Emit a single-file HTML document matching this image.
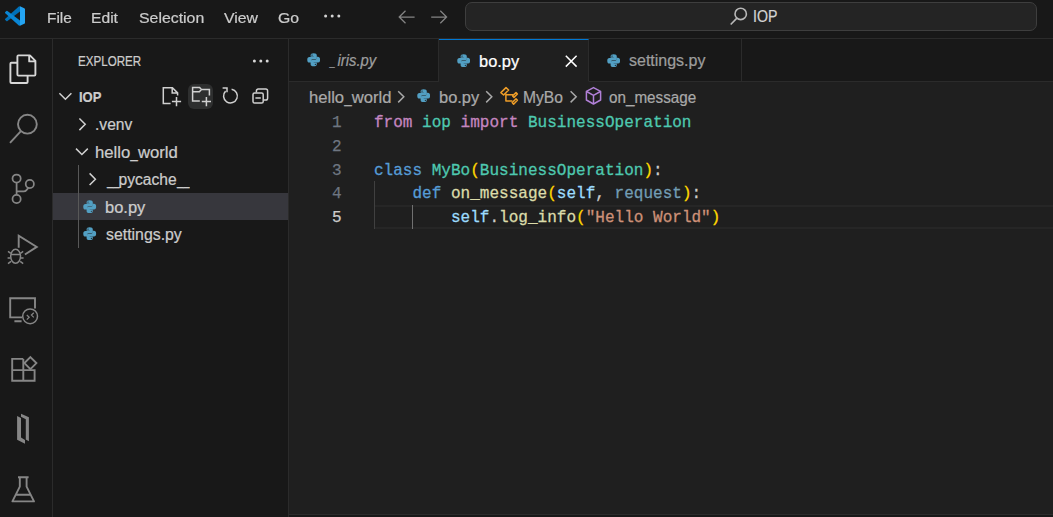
<!DOCTYPE html>
<html lang="en">
<head>
<meta charset="utf-8">
<title>bo.py - IOP - Visual Studio Code</title>
<style>
*{box-sizing:border-box;margin:0;padding:0}
html,body{width:1053px;height:517px;overflow:hidden;background:#181818}
body{position:relative;font-family:"Liberation Sans",sans-serif;color:#ccc;-webkit-font-smoothing:antialiased}
.abs{position:absolute}
.t{position:absolute;white-space:pre;line-height:1;transform-origin:0 0;-webkit-text-stroke:0.22px currentColor}
/* regions */
#titlebar{left:0;top:0;width:1053px;height:38px;background:#181818}
#tb-border{left:0;top:38px;width:1053px;height:1px;background:#2b2b2b}
#activity{left:0;top:39px;width:52px;height:478px;background:#181818}
#act-border{left:52px;top:39px;width:1px;height:478px;background:#2b2b2b}
#sidebar{left:53px;top:39px;width:235px;height:478px;background:#181818}
#side-border{left:288px;top:39px;width:1px;height:478px;background:#2b2b2b}
#editor{left:289px;top:39px;width:764px;height:475px;background:#1f1f1f}
#tabs{left:289px;top:39px;width:764px;height:43px;background:#181818}
#tabs-border{left:289px;top:81px;width:764px;height:1px;background:#2b2b2b}
#bottom-border{left:289px;top:514px;width:764px;height:1px;background:#2b2b2b}
#bottom-panel{left:289px;top:515px;width:764px;height:2px;background:#181818}
.tab{position:absolute;top:39px;height:43px;border-right:1px solid #2b2b2b;border-bottom:1px solid #2b2b2b;background:#181818}
.tab.active{background:#1f1f1f;border-bottom-color:#1f1f1f;border-top:1px solid #0078d4}
/* command center */
#cc{left:465px;top:2px;width:572px;height:29px;border:1px solid #3e3e3e;border-radius:7px;background:#242424}
/* text */
.us{display:inline-block;transform:scaleX(.72);transform-origin:0 0}
.menu{font-size:15.2px;color:#ccc}
.ui{font-size:15.2px;color:#ccc}
.code{font-family:"Liberation Mono",monospace;font-size:16.03px;color:#ccc;-webkit-text-stroke:0.3px currentColor}
.ln{font-family:"Liberation Mono",monospace;font-size:16.03px;color:#6e7681;-webkit-text-stroke:0.25px currentColor}
.kw{color:#c586c0}.kb{color:#569cd6}.cl{color:#4ec9b0}.fn{color:#dcdcaa}.pm{color:#9cdcfe}.st{color:#ce9178}.un{color:#729db4}.br{color:#ffd700}
</style>
</head>
<body>
<!-- ===== regions ===== -->
<div class="abs" id="titlebar"></div>
<div class="abs" id="tb-border"></div>
<div class="abs" id="activity"></div>
<div class="abs" id="act-border"></div>
<div class="abs" id="sidebar"></div>
<div class="abs" id="side-border"></div>
<div class="abs" id="editor"></div>
<div class="abs" id="tabs"></div>
<div class="abs" id="tabs-border"></div>
<div class="abs" id="bottom-border"></div>
<div class="abs" id="bottom-panel"></div>

<!-- ===== title bar ===== -->
<!-- vscode logo -->
<svg class="abs" style="left:5px;top:6px" width="20" height="20" viewBox="0 0 100 100">
  <path fill="#0070b8" d="M75 1 69 2.2 1.4 63.6a4.2 4.2 0 0 0 0 6.1l5.5 5a4.2 4.2 0 0 0 5.3.3L75 27.3z"/>
  <path fill="#0a86d4" d="M75 99 69 97.8 1.4 36.4a4.2 4.2 0 0 1 0-6.1l5.5-5a4.2 4.2 0 0 1 5.3-.3L75 72.7z"/>
  <path fill="#24a4f2" d="M75 .9 96.5 10.8A6.2 6.2 0 0 1 100 16.4V83.6a6.2 6.2 0 0 1-3.5 5.6L75 99.1z"/>
</svg>
<!-- menu ellipsis -->
<svg class="abs" style="left:322px;top:12px" width="22" height="10" viewBox="0 0 22 10"><g fill="#d4d4d4"><circle cx="3.6" cy="4" r="1.5"/><circle cx="10.2" cy="4" r="1.5"/><circle cx="16.8" cy="4" r="1.5"/></g></svg>
<!-- nav arrows -->
<svg class="abs" style="left:396px;top:7.6px" width="56" height="20" viewBox="0 0 56 20" fill="none" stroke="#848484" stroke-width="1.25" stroke-linecap="butt" stroke-linejoin="miter">
  <path d="M3.2 9H18.6M9.5 2.7 3.2 9l6.3 6.3"/>
  <path d="M35.2 9H50.6M44.3 2.7 50.6 9l-6.3 6.3"/>
</svg>
<!-- command center -->
<div class="abs" id="cc"></div>
<svg class="abs" style="left:728px;top:5px" width="22" height="22" viewBox="0 0 22 22" fill="none" stroke="#b8b8b8" stroke-width="1.6">
  <circle cx="12.7" cy="8.9" r="5.7"/><path d="M8.9 13.1 2.7 19.5"/>
</svg>


<!-- ===== activity bar ===== -->
<svg class="abs" style="left:0;top:39px" width="52" height="478" viewBox="0 39 52 478" fill="none" stroke="#868686" stroke-width="1.9" stroke-linejoin="miter">
  <!-- files (active) -->
  <g stroke="#d7d7d7" stroke-linejoin="round">
    <path d="M18.4 75.6H34.4Q35.4 75.6 35.4 74.6V60.9L29.9 55.4H18.4Q17.4 55.4 17.4 56.4V74.6Q17.4 75.6 18.4 75.6ZM29.2 55.8V61.4H35"/>
    <path d="M17 62.8H11.4Q10.4 62.8 10.4 63.8V82Q10.4 83 11.4 83H26.6Q27.6 83 27.6 82V76"/>
  </g>
  <!-- search -->
  <circle cx="27.4" cy="124.2" r="9.4"/><path d="M20.9 131.2 10 142.8"/>
  <!-- source control -->
  <g stroke-width="1.75"><circle cx="16.6" cy="178.6" r="4.1"/><circle cx="29.8" cy="184" r="4.1"/><circle cx="16.6" cy="199" r="4.1"/>
  <path d="M16.6 182.7V194.9M28.4 187.9 26.2 190.4Q25.4 191.4 23.8 191.4H16.8"/></g>
  <!-- debug -->
  <path d="M18.7 247.8V235.6L36.8 246.9 24.9 254.5"/>
  <g stroke-width="1.5"><ellipse cx="15.6" cy="256.3" rx="4.9" ry="7"/>
  <path d="M10.9 254.6H20.3M8 251.4 10.8 253.4M23.2 251.4 20.4 253.4M7.6 258H10.6M20.6 258H23.6M8 263.6 11 261.4M23.2 263.6 20.2 261.4"/></g>
  <!-- remote explorer -->
  <path d="M22 317.4H10.2V298.2H35V308.4M14.4 321.2H21.6"/>
  <g stroke-width="1.5"><circle cx="30.1" cy="316.3" r="7.4"/><path d="M26.8 315 29.2 317.3 26.8 319.6M33.8 312.8 31.4 315.1 33.8 317.4" stroke-width="1.2"/></g>
  <!-- extensions -->
  <path d="M23.3 358.9H12.2V380.8H34.6V370.1H12.2M23.3 358.9V380.8"/>
  <path d="M30.4 357.1 36.4 363.1 30.4 369.1 24.4 363.1Z"/>
  <!-- intersystems -->
  <g stroke="none" fill="#868686"><path d="M17.1 415.9 21 418V437.6L25 440V443.7L17.1 439.8Z"/><path d="M21 413.7 28.9 417.2V441.2L25.8 439.5V419.3L21 416.8Z"/></g>
  <!-- beaker -->
  <path stroke-linejoin="round" d="M18 477.2H28.6M19.8 477.2V486.6L12.4 501.4H34L26.6 486.6V477.2M15.6 494.8H30.8"/>
</svg>


<!-- ===== sidebar ===== -->
<!-- python icon symbol -->
<!-- explorer ellipsis -->
<svg class="abs" style="left:251.3px;top:56px" width="22" height="10" viewBox="0 0 22 10"><g fill="#d8d8d8"><circle cx="3.4" cy="5" r="1.5"/><circle cx="9.8" cy="5" r="1.5"/><circle cx="16.2" cy="5" r="1.5"/></g></svg>
<!-- selected row -->
<div class="abs" style="left:53px;top:193px;width:235px;height:27px;background:#37373d"></div>
<!-- indent guide -->
<div class="abs" style="left:78px;top:165px;width:1px;height:83px;background:#585858"></div>
<!-- twisties -->
<svg class="abs" style="left:56px;top:84px" width="50" height="110" viewBox="0 0 50 110" fill="none" stroke="#d0d0d0" stroke-width="1.5">
  <path d="M3.4 9.2 9.4 15.2 15.4 9.2"/>
  <path d="M23.4 34.5 29.2 40.3 23.4 46.1"/>
  <path d="M20 64.6 25.9 70.5 31.8 64.6"/>
  <path d="M33.6 89.4 39.4 95.2 33.6 101"/>
</svg>
<!-- file icons -->
<svg class="abs py" style="left:83.3px;top:199.6px" width="13.4" height="13.4" viewBox="0 0 16 16"><g fill="#529fc3"><path d="M4.3 2.7Q4.3 0.3 8 0.3Q11.7 0.3 11.7 2.7V6.1Q11.7 7.75 10 7.75H6.5Q4.8 7.75 4.8 9.4V11.4H2.9Q0.3 11.4 0.3 8Q0.3 4.7 2.9 4.7H8V4.35H4.3ZM6 1.7A.75.75 0 1 0 6 3.2A.75.75 0 0 0 6 1.7Z"/><path d="M11.7 13.3Q11.7 15.7 8 15.7Q4.3 15.7 4.3 13.3V9.9Q4.3 8.25 6 8.25H9.5Q11.2 8.25 11.2 6.6V4.6H13.1Q15.7 4.6 15.7 8Q15.7 11.3 13.1 11.3H8V11.65H11.7ZM10 14.3A.75.75 0 1 0 10 12.8A.75.75 0 0 0 10 14.3Z"/></g></svg>
<svg class="abs py" style="left:83.3px;top:227.1px" width="13.4" height="13.4" viewBox="0 0 16 16"><g fill="#529fc3"><path d="M4.3 2.7Q4.3 0.3 8 0.3Q11.7 0.3 11.7 2.7V6.1Q11.7 7.75 10 7.75H6.5Q4.8 7.75 4.8 9.4V11.4H2.9Q0.3 11.4 0.3 8Q0.3 4.7 2.9 4.7H8V4.35H4.3ZM6 1.7A.75.75 0 1 0 6 3.2A.75.75 0 0 0 6 1.7Z"/><path d="M11.7 13.3Q11.7 15.7 8 15.7Q4.3 15.7 4.3 13.3V9.9Q4.3 8.25 6 8.25H9.5Q11.2 8.25 11.2 6.6V4.6H13.1Q15.7 4.6 15.7 8Q15.7 11.3 13.1 11.3H8V11.65H11.7ZM10 14.3A.75.75 0 1 0 10 12.8A.75.75 0 0 0 10 14.3Z"/></g></svg>
<!-- toolbar: new-folder hover bg -->
<div class="abs" style="left:188px;top:84px;width:25px;height:25px;border-radius:6px;background:#2e2f2f"></div>
<svg class="abs" style="left:160px;top:84px" width="112" height="25" viewBox="0 0 112 25" fill="none" stroke="#d0d0d0" stroke-width="1.5" stroke-linejoin="miter">
  <!-- new file -->
  <path d="M10.6 19.4H3.3V3.7H12.4L17.6 8.9V11.4M12.2 3.9V9.1H17.4"/>
  <path d="M16.5 13V22.2M11.9 17.6H21.1"/>
  <!-- new folder -->
  <path d="M39.8 17H32.6V3.6H39.6L41.4 5.6H49.4V11.4M32.6 7.8H39.4L41.2 5.8"/>
  <path d="M46.4 13V22.2M41.8 17.6H51"/>
  <!-- refresh -->
  <path d="M65.6 7.1A6.9 6.9 0 1 0 71.6 5.2" />
  <path d="M62.6 3.9H67V8.3" />
  <!-- collapse all -->
  <rect x="93" y="8.9" width="10.2" height="10.2" rx="1.6"/>
  <path d="M96.4 8.6V6.9a1.8 1.8 0 0 1 1.8-1.8H105.8a1.8 1.8 0 0 1 1.8 1.8V14.2a1.8 1.8 0 0 1-1.8 1.8H103.6"/>
  <path d="M95.4 14H100.8"/>
</svg>


<!-- ===== tabs ===== -->
<div class="tab" style="left:289px;width:150px"></div>
<div class="tab active" style="left:439px;width:150px"></div>
<div class="tab" style="left:589px;width:153px"></div>
<!-- python file icons -->
<svg class="abs py" style="left:306.8px;top:53.4px" width="13.4" height="13.4" viewBox="0 0 16 16"><g fill="#529fc3"><path d="M4.3 2.7Q4.3 0.3 8 0.3Q11.7 0.3 11.7 2.7V6.1Q11.7 7.75 10 7.75H6.5Q4.8 7.75 4.8 9.4V11.4H2.9Q0.3 11.4 0.3 8Q0.3 4.7 2.9 4.7H8V4.35H4.3ZM6 1.7A.75.75 0 1 0 6 3.2A.75.75 0 0 0 6 1.7Z"/><path d="M11.7 13.3Q11.7 15.7 8 15.7Q4.3 15.7 4.3 13.3V9.9Q4.3 8.25 6 8.25H9.5Q11.2 8.25 11.2 6.6V4.6H13.1Q15.7 4.6 15.7 8Q15.7 11.3 13.1 11.3H8V11.65H11.7ZM10 14.3A.75.75 0 1 0 10 12.8A.75.75 0 0 0 10 14.3Z"/></g></svg>
<svg class="abs py" style="left:456.8px;top:53.5px" width="13.4" height="13.4" viewBox="0 0 16 16"><g fill="#529fc3"><path d="M4.3 2.7Q4.3 0.3 8 0.3Q11.7 0.3 11.7 2.7V6.1Q11.7 7.75 10 7.75H6.5Q4.8 7.75 4.8 9.4V11.4H2.9Q0.3 11.4 0.3 8Q0.3 4.7 2.9 4.7H8V4.35H4.3ZM6 1.7A.75.75 0 1 0 6 3.2A.75.75 0 0 0 6 1.7Z"/><path d="M11.7 13.3Q11.7 15.7 8 15.7Q4.3 15.7 4.3 13.3V9.9Q4.3 8.25 6 8.25H9.5Q11.2 8.25 11.2 6.6V4.6H13.1Q15.7 4.6 15.7 8Q15.7 11.3 13.1 11.3H8V11.65H11.7ZM10 14.3A.75.75 0 1 0 10 12.8A.75.75 0 0 0 10 14.3Z"/></g></svg>
<svg class="abs py" style="left:606.8px;top:53.5px" width="13.4" height="13.4" viewBox="0 0 16 16"><g fill="#529fc3"><path d="M4.3 2.7Q4.3 0.3 8 0.3Q11.7 0.3 11.7 2.7V6.1Q11.7 7.75 10 7.75H6.5Q4.8 7.75 4.8 9.4V11.4H2.9Q0.3 11.4 0.3 8Q0.3 4.7 2.9 4.7H8V4.35H4.3ZM6 1.7A.75.75 0 1 0 6 3.2A.75.75 0 0 0 6 1.7Z"/><path d="M11.7 13.3Q11.7 15.7 8 15.7Q4.3 15.7 4.3 13.3V9.9Q4.3 8.25 6 8.25H9.5Q11.2 8.25 11.2 6.6V4.6H13.1Q15.7 4.6 15.7 8Q15.7 11.3 13.1 11.3H8V11.65H11.7ZM10 14.3A.75.75 0 1 0 10 12.8A.75.75 0 0 0 10 14.3Z"/></g></svg>
<!-- close -->
<svg class="abs" style="left:564px;top:54px" width="14" height="14" viewBox="0 0 14 14" fill="none" stroke="#fff" stroke-width="1.5"><path d="M1.8 1.8 12.6 12.6M12.6 1.8 1.8 12.6"/></svg>


<!-- ===== breadcrumbs ===== -->
<svg class="abs py" style="left:417px;top:89px" width="13.4" height="13.4" viewBox="0 0 16 16"><g fill="#529fc3"><path d="M4.3 2.7Q4.3 0.3 8 0.3Q11.7 0.3 11.7 2.7V6.1Q11.7 7.75 10 7.75H6.5Q4.8 7.75 4.8 9.4V11.4H2.9Q0.3 11.4 0.3 8Q0.3 4.7 2.9 4.7H8V4.35H4.3ZM6 1.7A.75.75 0 1 0 6 3.2A.75.75 0 0 0 6 1.7Z"/><path d="M11.7 13.3Q11.7 15.7 8 15.7Q4.3 15.7 4.3 13.3V9.9Q4.3 8.25 6 8.25H9.5Q11.2 8.25 11.2 6.6V4.6H13.1Q15.7 4.6 15.7 8Q15.7 11.3 13.1 11.3H8V11.65H11.7ZM10 14.3A.75.75 0 1 0 10 12.8A.75.75 0 0 0 10 14.3Z"/></g></svg>
<!-- chevrons -->
<svg class="abs" style="left:395.4px;top:87.8px" width="190" height="18" viewBox="0 0 190 18" fill="none" stroke="#a9a9a9" stroke-width="1.5">
  <path d="M3.2 3.2 8.8 8.8 3.2 14.4"/>
  <path d="M91.2 3.2 96.8 8.8 91.2 14.4"/>
  <path d="M175.6 3.2 181.2 8.8 175.6 14.4"/>
</svg>
<!-- symbol-class (orange) -->
<svg class="abs" style="left:499px;top:86px" width="21" height="21" viewBox="0 0 21 21" fill="none" stroke="#ee9d28" stroke-width="1.5" stroke-linejoin="round">
  <path d="M7 1.6 9.6 4 4.6 9 1.9 6.6z"/>
  <path d="M17 6.5 18.4 8 15 11.4 13.6 9.9z"/>
  <path d="M17 12.8 18.4 14.3 14.6 18.3 13.2 16.6z"/>
  <path d="M6.9 7.4V15H13.4M6.9 8.8H14"/>
</svg>
<!-- symbol-method (purple cube) -->
<svg class="abs" style="left:584.3px;top:86.4px" width="19" height="20" viewBox="0 0 19 20" fill="none" stroke="#b180d7" stroke-width="1.5" stroke-linejoin="round">
  <path d="M9.5 1.6 16.6 5.4V14L9.5 18 2.4 14V5.4z"/>
  <path d="M2.6 5.5 9.5 9.4 16.4 5.5M9.5 9.4V17.8"/>
</svg>


<!-- ===== code ===== -->
<!-- current line highlight -->
<div class="abs" style="left:374px;top:205px;width:679px;height:24px;border-top:2px solid #262626;border-bottom:2px solid #262626"></div>
<!-- indent guides -->
<div class="abs" style="left:374px;top:181.25px;width:1px;height:47.5px;background:#404040"></div>
<div class="abs" style="left:412px;top:205px;width:1px;height:23.75px;background:#707070"></div>

<div class="t ln" style="left:331.98px;top:111.08px;line-height:23.75px;font-size:17.0px;transform:scaleX(0.9430);color:#6e7681">1</div>
<div class="t code" style="left:373.66px;top:111.08px;line-height:23.75px;font-size:17.0px;transform:scaleX(0.9430)"><span class="kw">from</span> <span class="cl">iop</span> <span class="kw">import</span> <span class="cl">BusinessOperation</span></div>
<div class="t ln" style="left:331.98px;top:134.82px;line-height:23.75px;font-size:17.0px;transform:scaleX(0.9430);color:#6e7681">2</div>
<div class="t ln" style="left:331.98px;top:158.57px;line-height:23.75px;font-size:17.0px;transform:scaleX(0.9430);color:#6e7681">3</div>
<div class="t code" style="left:373.66px;top:158.57px;line-height:23.75px;font-size:17.0px;transform:scaleX(0.9430)"><span class="kb">class</span> <span class="cl">MyBo</span><span class="br">(</span><span class="cl">BusinessOperation</span><span class="br">)</span>:</div>
<div class="t ln" style="left:331.98px;top:182.32px;line-height:23.75px;font-size:17.0px;transform:scaleX(0.9430);color:#6e7681">4</div>
<div class="t code" style="left:373.66px;top:182.32px;line-height:23.75px;font-size:17.0px;transform:scaleX(0.9430)">    <span class="kb">def</span> <span class="fn">on_message</span><span class="br">(</span><span class="pm">self</span>, <span class="un">request</span><span class="br">)</span>:</div>
<div class="t ln" style="left:331.98px;top:206.07px;line-height:23.75px;font-size:17.0px;transform:scaleX(0.9430);color:#cccccc">5</div>
<div class="t code" style="left:373.66px;top:206.07px;line-height:23.75px;font-size:17.0px;transform:scaleX(0.9430)">        <span class="pm">self</span>.<span class="fn">log_info</span><span class="br">(</span><span class="st">"Hello World"</span><span class="br">)</span></div>

<!-- ===== ui text ===== -->
<div class="t" style="left:46.57px;top:10.40px;font-size:15.0px;color:#cccccc;transform:scaleX(1.0251);will-change:transform">File</div>
<div class="t" style="left:90.56px;top:10.40px;font-size:15.0px;color:#cccccc;transform:scaleX(1.0436);will-change:transform">Edit</div>
<div class="t" style="left:138.60px;top:10.40px;font-size:15.0px;color:#cccccc;transform:scaleX(1.0576);will-change:transform">Selection</div>
<div class="t" style="left:223.60px;top:10.40px;font-size:15.0px;color:#cccccc;transform:scaleX(1.0553);will-change:transform">View</div>
<div class="t" style="left:277.70px;top:10.40px;font-size:15.0px;color:#cccccc;transform:scaleX(1.0525);will-change:transform">Go</div>
<div class="t" style="left:753.00px;top:8.80px;font-size:15.8px;color:#d4d4d4;transform:scaleX(0.8958);">IOP</div>
<div class="t" style="left:77.98px;top:53.90px;font-size:14.2px;color:#cccccc;transform:scaleX(0.8169);">EXPLORER</div>
<div class="t" style="left:78.50px;top:89.70px;font-size:14.4px;color:#cccccc;transform:scaleX(0.9051);font-weight:bold">IOP</div>
<div class="t" style="left:94.80px;top:116.90px;font-size:15.6px;color:#cccccc;transform:scaleX(1.0007);">.venv</div>
<div class="t" style="left:104.94px;top:200.20px;font-size:15.6px;color:#cccccc;transform:scaleX(1.0576);">bo.py</div>
<div class="t" style="left:106.00px;top:227.00px;font-size:15.6px;color:#cccccc;transform:scaleX(1.0168);">settings.py</div>
<div class="t" style="left:478.95px;top:53.50px;font-size:15.6px;color:#ffffff;transform:scaleX(1.0522);">bo.py</div>
<div class="t" style="left:629.40px;top:53.40px;font-size:15.6px;color:#9d9d9d;transform:scaleX(1.0248);">settings.py</div>
<div class="t" style="left:438.55px;top:89.70px;font-size:15.6px;color:#a9a9a9;transform:scaleX(1.0549);">bo.py</div>
<div class="t" style="left:522.70px;top:89.70px;font-size:15.6px;color:#a9a9a9;transform:scaleX(1.0029);">MyBo</div>
<div class="t" style="left:608.70px;top:89.70px;font-size:15.6px;color:#a9a9a9;transform:scaleX(0.9772);">on_message</div>
<div class="t" style="left:94.70px;top:144.60px;font-size:15.6px;color:#cccccc;transform:scaleX(1.0700)">hello<span class="us" style="width:7.2px;transform:scaleX(.81)">_</span>world</div>
<div class="t" style="left:106.90px;top:171.70px;font-size:15.6px;color:#cccccc;transform:scaleX(1.0000)"><span class="us" style="width:11.7px">__</span>pycache<span class="us" style="width:14px">__</span></div>
<div class="t" style="left:330.20px;top:53.30px;font-size:15.6px;color:#9d9d9d;font-style:italic;transform:scaleX(0.9520)"><span class="us" style="width:7.9px;transform:scaleX(.64)">_</span>iris.py</div>
<div class="t" style="left:308.80px;top:89.70px;font-size:15.6px;color:#a9a9a9;transform:scaleX(1.0650)">hello<span class="us" style="width:7.2px;transform:scaleX(.81)">_</span>world</div>
</body>
</html>
